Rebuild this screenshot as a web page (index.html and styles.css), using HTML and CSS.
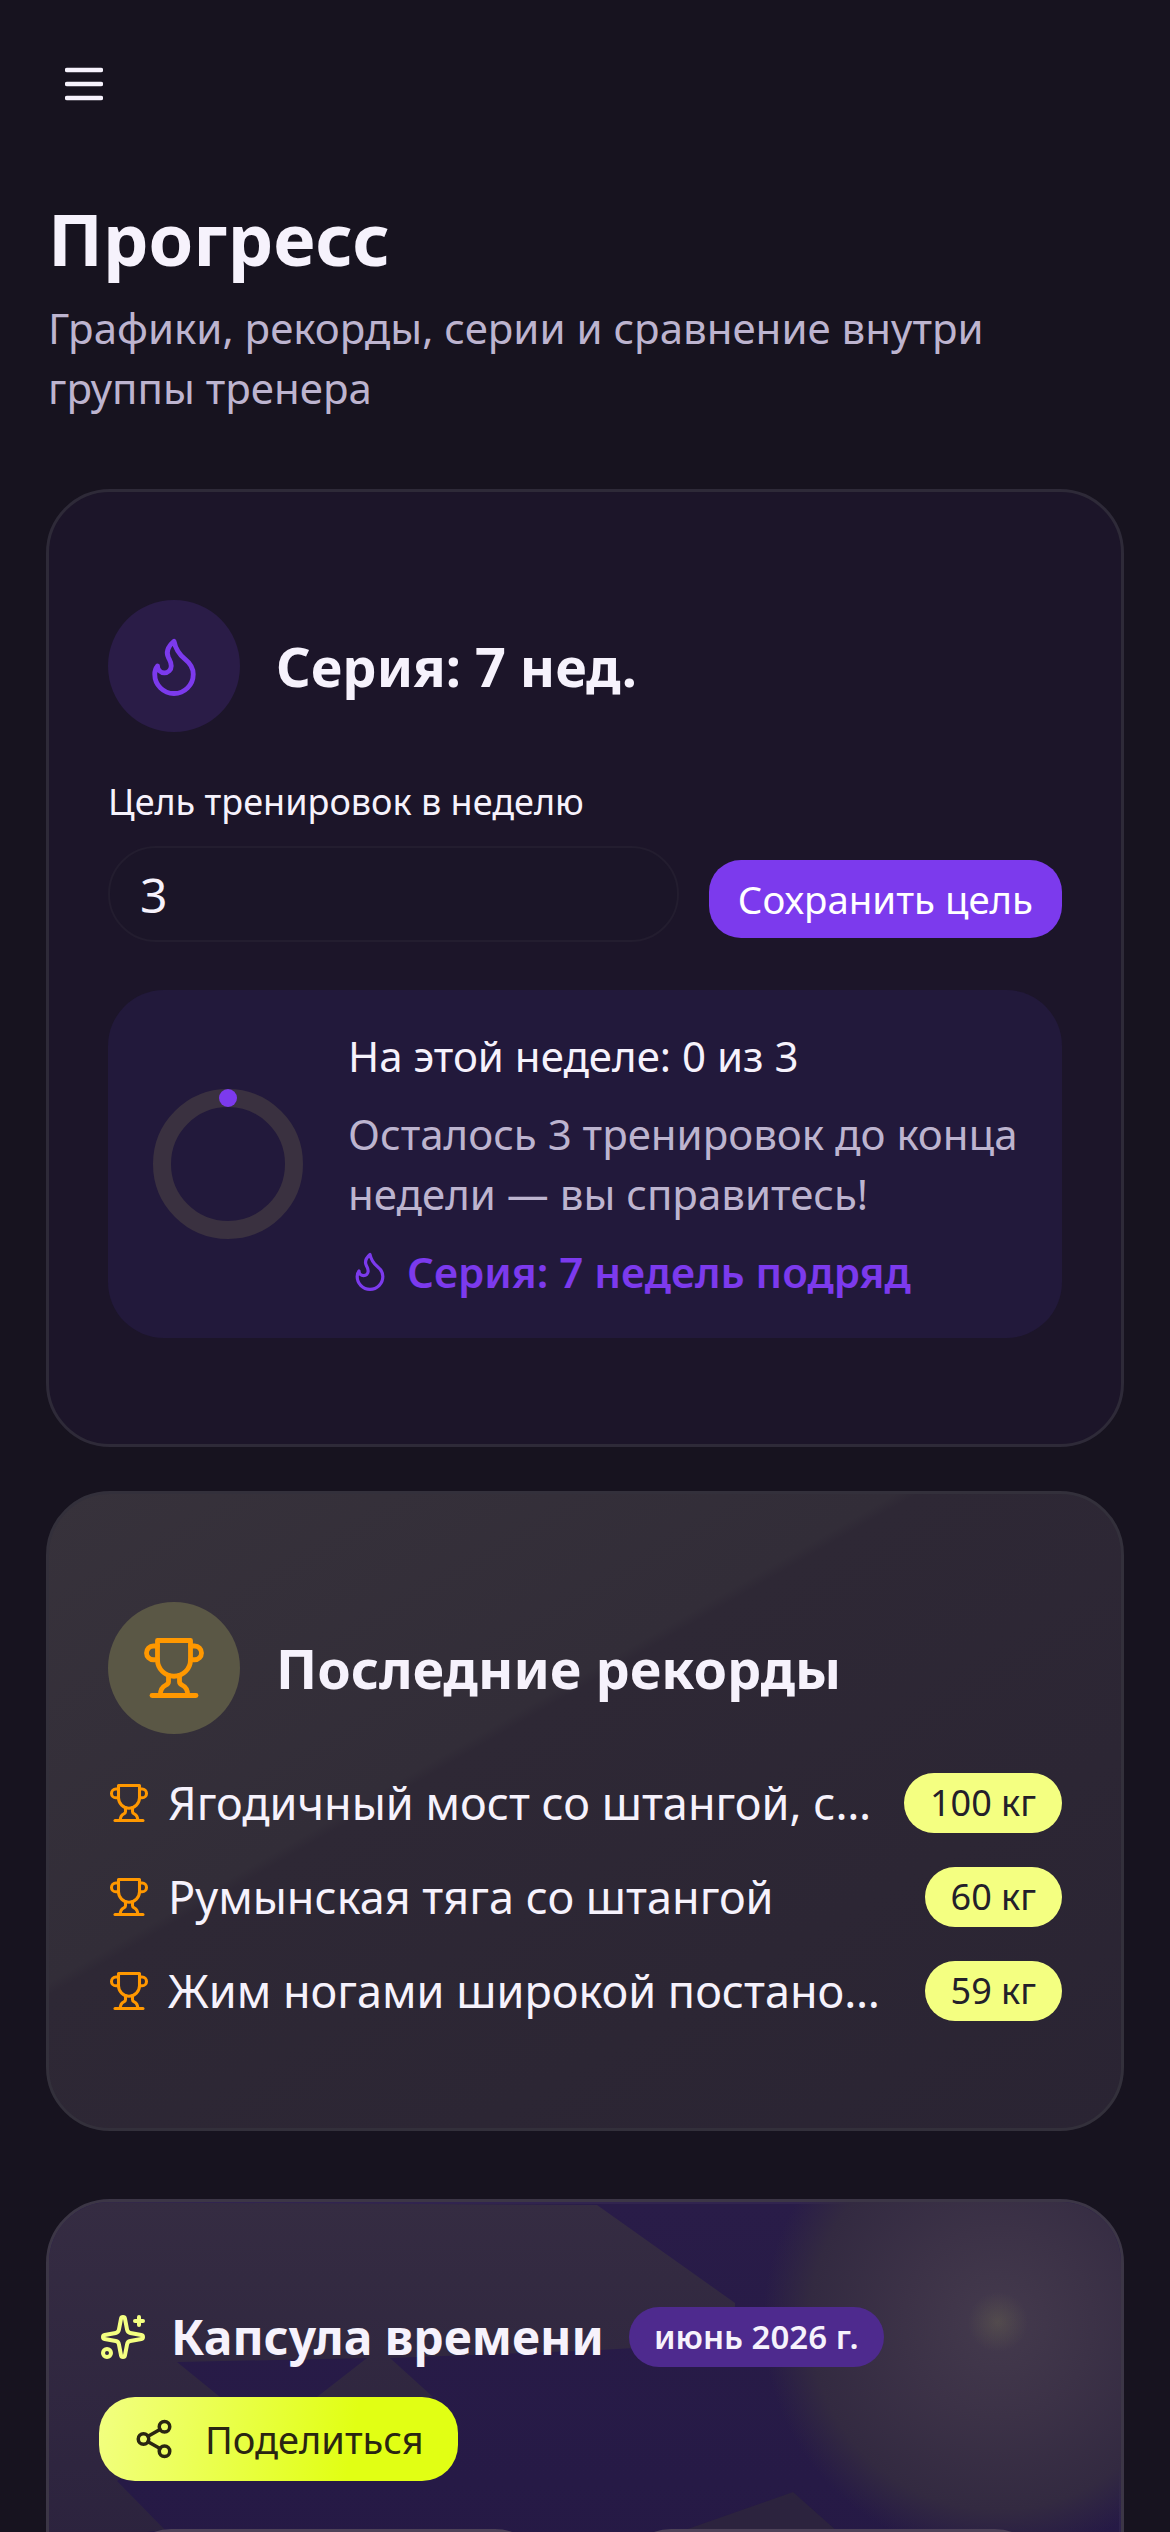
FILE: index.html
```html
<!DOCTYPE html>
<html lang="ru">
<head>
    <meta charset="UTF-8">
    <meta name="viewport" content="width=device-width, initial-scale=1.0">
    <title>Прогресс</title>
    <link rel="stylesheet" href="styles.css">
</head>
<body>
    <svg class="sprite" aria-hidden="true">
        <symbol id="flame" viewBox="0 0 24 24">
            <path d="M8.500 14.500A2.500 2.500 0 0 0 11 12c0-1.380-.5-2-1-3-1.072-2.143-.224-4.054 2-6 .5 2.500 2 4.900 4 6.500 2 1.600 3 3.500 3 5.500a7 7 0 1 1-14 0c0-1.153.433-2.294 1-3a2.500 2.500 0 0 0 2.500 2.500z"/>
        </symbol>
        <symbol id="trophy" viewBox="0 0 24 24">
            <path d="M6 9H4.500a2.500 2.500 0 0 1 0-5H6"/>
            <path d="M18 9h1.500a2.500 2.500 0 0 0 0-5H18"/>
            <path d="M4 22h16"/>
            <path d="M10 14.660V17c0 .55-.47.98-.97 1.210C7.850 18.750 7 20.240 7 22"/>
            <path d="M14 14.660V17c0 .55.47.98.97 1.210C16.150 18.750 17 20.240 17 22"/>
            <path d="M18 2H6v7a6 6 0 0 0 12 0V2Z"/>
        </symbol>
    </svg>

    <div class="page">
        <button class="menu-btn" type="button" aria-label="Меню">
            <svg class="menu-icon" viewBox="0 0 38 34" fill="none" stroke="currentColor" stroke-width="4.500" stroke-linecap="round">
                <path d="M2 3h34M2 17h34M2 31h34"/>
            </svg>
        </button>

        <header class="page-head">
            <h1>Прогресс</h1>
            <p>Графики, рекорды, серии и сравнение внутри группы тренера</p>
        </header>

        <section class="card card-streak">
            <div class="card-head">
                <span class="head-icon head-icon-violet">
                    <svg class="line-icon"><use href="#flame"/></svg>
                </span>
                <h2>Серия: 7 нед.</h2>
            </div>

            <label class="goal-label" for="goal">Цель тренировок в неделю</label>
            <div class="goal-row">
                <input class="goal-input" id="goal" type="text" value="3">
                <button class="goal-save" type="button">Сохранить цель</button>
            </div>

            <div class="week-box">
                <svg class="ring" viewBox="0 0 150 150">
                    <circle cx="75" cy="75" r="66" fill="none" stroke="#3a3140" stroke-width="18"/>
                    <circle cx="75" cy="9" r="9" fill="#7c3aed"/>
                </svg>
                <div class="week-text">
                    <div class="week-title">На этой неделе: 0 из 3</div>
                    <div class="week-note">Осталось 3 тренировок до конца недели — вы справитесь!</div>
                    <div class="week-streak">
                        <svg class="line-icon"><use href="#flame"/></svg>
                        <span>Серия: 7 недель подряд</span>
                    </div>
                </div>
            </div>
        </section>

        <section class="card card-records">
            <div class="card-head">
                <span class="head-icon head-icon-amber">
                    <svg class="line-icon"><use href="#trophy"/></svg>
                </span>
                <h2>Последние рекорды</h2>
            </div>

            <ul class="records">
                <li class="record">
                    <svg class="line-icon record-icon"><use href="#trophy"/></svg>
                    <span class="record-name">Ягодичный мост со штангой, с…</span>
                    <span class="record-value">100 кг</span>
                </li>
                <li class="record">
                    <svg class="line-icon record-icon"><use href="#trophy"/></svg>
                    <span class="record-name">Румынская тяга со штангой</span>
                    <span class="record-value">60 кг</span>
                </li>
                <li class="record">
                    <svg class="line-icon record-icon"><use href="#trophy"/></svg>
                    <span class="record-name">Жим ногами широкой постано…</span>
                    <span class="record-value">59 кг</span>
                </li>
            </ul>
        </section>

        <section class="card card-capsule">
            <svg class="capsule-bg" viewBox="0 0 1072 340" aria-hidden="true">
                <defs>
                    <linearGradient id="shardFill" x1="0" y1="0" x2="0" y2="1">
                        <stop offset="0" stop-color="#352c42"/>
                        <stop offset="1" stop-color="#2c233e"/>
                    </linearGradient>
                    <radialGradient id="glowFill">
                        <stop offset="0" stop-color="#443a4d"/>
                        <stop offset="0.4" stop-color="#3c3247"/>
                        <stop offset="0.8" stop-color="#332a41"/>
                        <stop offset="1" stop-color="#332a41" stop-opacity="0"/>
                    </radialGradient>
                    <radialGradient id="sparkFill">
                        <stop offset="0" stop-color="#6e6a4e" stop-opacity="0.35"/>
                        <stop offset="1" stop-color="#6e6a4e" stop-opacity="0"/>
                    </radialGradient>
                </defs>
                <polygon fill="url(#shardFill)" points="0,0 548,3 686,101 686,140 551,148 341,156 384,195 268,195 318,156 128,160 171,195 68,279 116,328 0,340"/>
                <polygon fill="#2c233e" points="744,290 630,330 789,330"/>
                <circle cx="949" cy="120" r="235" fill="url(#glowFill)"/>
                <circle cx="949" cy="120" r="30" fill="url(#sparkFill)"/>
            </svg>

            <div class="capsule-head">
                <svg class="capsule-icon" viewBox="0 0 24 24" fill="none" stroke="currentColor" stroke-width="2" stroke-linecap="round" stroke-linejoin="round">
                    <path d="M11.017 2.814a1 1 0 0 1 1.966 0l1.051 5.558a2 2 0 0 0 1.594 1.594l5.558 1.051a1 1 0 0 1 0 1.966l-5.558 1.051a2 2 0 0 0-1.594 1.594l-1.051 5.558a1 1 0 0 1-1.966 0l-1.051-5.558a2 2 0 0 0-1.594-1.594l-5.558-1.051a1 1 0 0 1 0-1.966l5.558-1.051a2 2 0 0 0 1.594-1.594z"/>
                    <path d="M20 2v4"/>
                    <path d="M22 4h-4"/>
                    <circle cx="4" cy="20" r="2"/>
                </svg>
                <h2>Капсула времени</h2>
                <span class="capsule-date">июнь 2026 г.</span>
            </div>
            <button class="share-btn" type="button">
                <svg viewBox="0 0 24 24" fill="none" stroke="currentColor" stroke-width="2" stroke-linecap="round" stroke-linejoin="round">
                    <circle cx="18" cy="5" r="3"/>
                    <circle cx="6" cy="12" r="3"/>
                    <circle cx="18" cy="19" r="3"/>
                    <path d="m8.590 13.510 6.830 3.980"/>
                    <path d="m15.410 6.510-6.820 3.980"/>
                </svg>
                <span>Поделиться</span>
            </button>
            <div class="capsule-stats">
                <div class="capsule-stat"></div>
                <div class="capsule-stat"></div>
            </div>
        </section>
    </div>
</body>
</html>
```

FILE: styles.css
```css
* {
    box-sizing: border-box;
}

html, body {
    margin: 0;
    padding: 0;
    background-color: #17131f;
}

body {
    font-family: "Noto Sans", sans-serif;
    color: #f6f2fc;
}

h1, h2, p, ul {
    margin: 0;
    padding: 0;
}

.sprite {
    display: none;
}

.line-icon {
    fill: none;
    stroke: currentColor;
    stroke-width: 1.75;
    stroke-linecap: round;
    stroke-linejoin: round;
}

.page {
    height: 2532px;
    overflow: hidden;
    padding: 67px 46px 0;
}

.menu-btn {
    display: block;
    margin-left: 19px;
    padding: 0;
    width: 38px;
    height: 34px;
    background: none;
    border: none;
    color: #f6f2fc;
}

.menu-icon {
    display: block;
    width: 38px;
    height: 34px;
}

.page-head {
    margin-top: 93px;
    padding-left: 2px;
}

.page-head h1 {
    font-size: 72px;
    line-height: 88px;
    font-weight: 700;
}

.page-head p {
    margin-top: 16px;
    font-size: 42px;
    line-height: 60px;
    color: #bdb4cf;
}

.card {
    border-radius: 64px;
    border: 3px solid #2e2a38;
    padding: 108px 59px 0;
}

.card-streak {
    margin-top: 71px;
    height: 958px;
    background-color: #1c1529;
}

.card-head {
    display: flex;
    align-items: center;
    gap: 36px;
}

.card-head h2 {
    font-size: 54px;
    line-height: 72px;
    font-weight: 700;
}

.head-icon {
    flex: none;
    display: flex;
    align-items: center;
    justify-content: center;
    width: 132px;
    height: 132px;
    border-radius: 50%;
}

.head-icon svg {
    width: 66px;
    height: 66px;
}

.head-icon-violet {
    background-color: #2a1c47;
    color: #7c3aed;
}

.head-icon-amber {
    background-color: #5a5745;
    color: #ff9800;
}

.goal-label {
    display: block;
    margin-top: 45px;
    font-size: 36px;
    line-height: 50px;
}

.goal-row {
    display: flex;
    align-items: flex-end;
    gap: 30px;
    margin-top: 19px;
}

.goal-input {
    flex: 1;
    min-width: 0;
    height: 96px;
    padding: 0 30px;
    font: inherit;
    font-size: 48px;
    color: #f6f2fc;
    background-color: #1b1528;
    border: 2px solid #231d2f;
    border-radius: 48px;
    outline: none;
}

.goal-save {
    flex: none;
    height: 78px;
    margin-bottom: 4px;
    padding: 0 29px;
    font: inherit;
    font-size: 38.400px;
    color: #fff;
    background-color: #7c3aed;
    border: none;
    border-radius: 32px;
}

.week-box {
    display: flex;
    align-items: center;
    gap: 45px;
    margin-top: 48px;
    padding: 0 30px 2px 45px;
    height: 348px;
    background-color: #22193b;
    border-radius: 56px;
}

.ring {
    flex: none;
    width: 150px;
    height: 150px;
    margin-top: 2px;
}

.week-title {
    font-size: 42px;
    line-height: 59px;
}

.week-note {
    margin-top: 19px;
    font-size: 42px;
    line-height: 60px;
    color: #bdb4cf;
}

.week-streak {
    display: flex;
    align-items: center;
    gap: 15px;
    margin-top: 18px;
    font-size: 42px;
    line-height: 59px;
    font-weight: 600;
    color: #7c3aed;
}

.week-streak svg {
    flex: none;
    width: 44px;
    height: 44px;
}

.card-records {
    margin-top: 44px;
    height: 640px;
    border-color: #33303b;
    background: linear-gradient(150deg, #37323b 0%, #322d38 39%, #2e2835 40%, #2a2433 100%);
}

.records {
    list-style: none;
    margin-top: 39px;
}

.record {
    display: flex;
    align-items: center;
    gap: 18px;
    height: 60px;
    margin-bottom: 34px;
}

.record-icon {
    flex: none;
    width: 42px;
    height: 42px;
    color: #ff9800;
}

.record-name {
    flex: 1;
    min-width: 0;
    font-size: 45px;
    line-height: 60px;
    white-space: nowrap;
}

.record-value {
    flex: none;
    height: 60px;
    padding: 0 26px;
    font-size: 36px;
    line-height: 60px;
    color: #23202a;
    background-color: #f4ff81;
    border-radius: 30px;
}

.card-capsule {
    position: relative;
    overflow: hidden;
    margin-top: 68px;
    height: 700px;
    padding: 102px 50px 0;
    border-color: #3c3646;
    background: linear-gradient(180deg, #291c48 0%, #261a46 40%, #23173f 100%);
    box-shadow: inset 0 0 0 2px rgba(255, 255, 255, 0.04);
}

.capsule-bg {
    position: absolute;
    left: 0;
    top: 0;
    width: 1072px;
    height: 340px;
}

.capsule-head {
    position: relative;
    display: flex;
    align-items: center;
}

.capsule-icon {
    flex: none;
    width: 48px;
    height: 48px;
    color: #f4ff81;
}

.capsule-head h2 {
    margin-left: 24px;
    font-size: 48px;
    line-height: 66px;
    font-weight: 700;
}

.capsule-date {
    margin-left: 25px;
    height: 60px;
    padding: 0 25px;
    font-size: 33px;
    line-height: 60px;
    font-weight: 600;
    background-color: #4e2a8e;
    border-radius: 30px;
}

.share-btn {
    position: relative;
    display: flex;
    align-items: center;
    gap: 30px;
    width: 359px;
    height: 84px;
    margin-top: 27px;
    padding: 0 34px;
    font: inherit;
    font-size: 38px;
    color: #2a2612;
    background: linear-gradient(100deg, #f2ff81 0%, #e1ff14 70%);
    border: none;
    border-radius: 36px;
}

.share-btn svg {
    flex: none;
    width: 42px;
    height: 42px;
}

.capsule-stats {
    position: relative;
    display: grid;
    grid-template-columns: 1fr 1fr;
    gap: 76px;
    margin-top: 48px;
    padding: 0 26px 0 22px;
}

.capsule-stat {
    height: 100px;
    background-color: #4d4258;
    border-radius: 60px;
}
```
